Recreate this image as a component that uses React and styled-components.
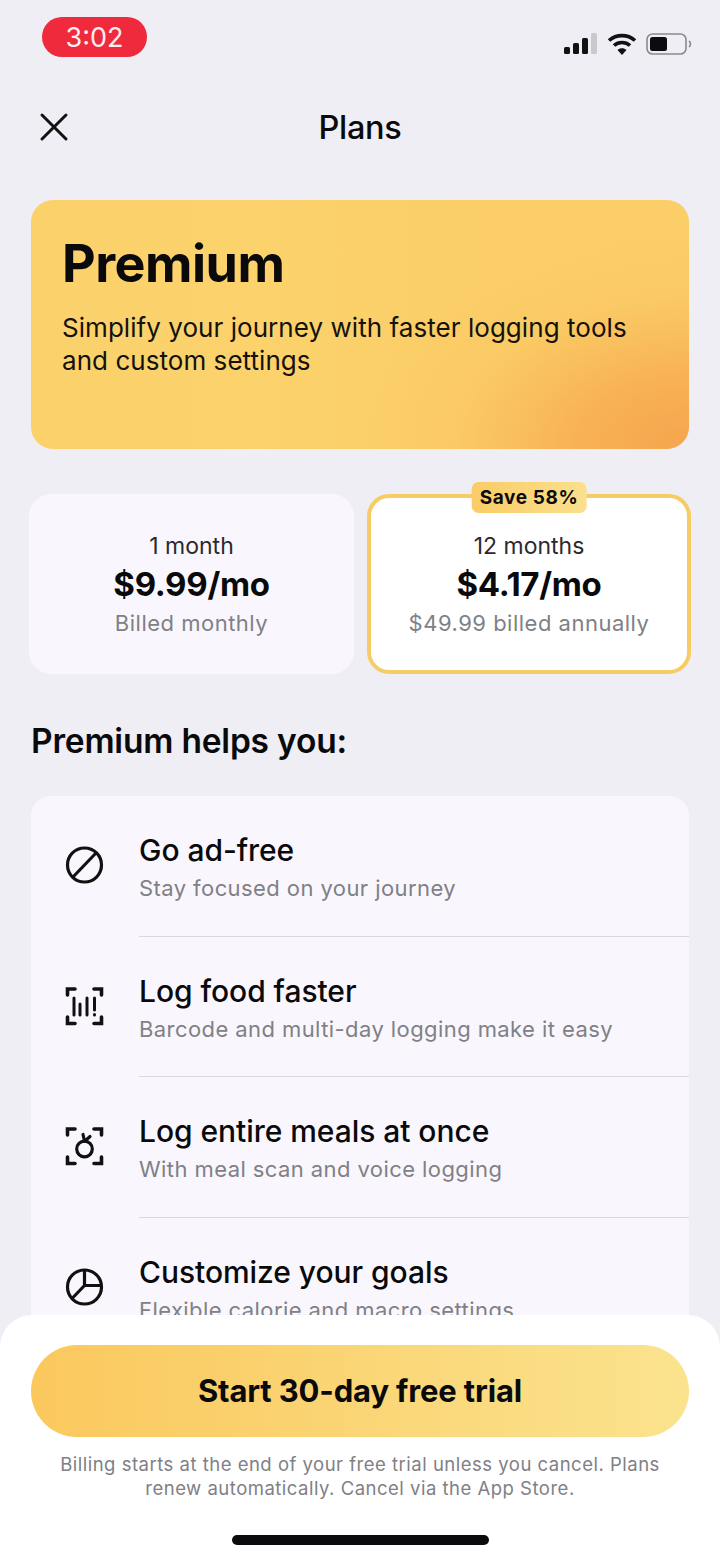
import React from "react";
import styled, { createGlobalStyle } from "styled-components";

const GlobalStyle = createGlobalStyle`
    html, body {
        margin: 0;
        padding: 0;
        background: #eeeef4;
        font-family: Inter, "Liberation Sans", sans-serif;
        color: #0a0a0c;
    }
`

const Page = styled.div`
    position: relative;
    width: 720px;
    height: 1560px;
    overflow: hidden;
    background: #eeeef4;
`

const StatusBar = styled.div`
    display: flex;
    align-items: center;
    justify-content: space-between;
    height: 40px;
    padding: 17px 28px 0 42px;
`

const TimePill = styled.div`
    display: flex;
    align-items: center;
    justify-content: center;
    width: 105px;
    height: 40px;
    border-radius: 20px;
    background: #ee2a3c;
    color: #fbeef0;
    font-size: 27px;
    font-weight: 400;
`

const StatusIcons = styled.div`
    display: flex;
    align-items: center;
    gap: 9px;
    padding-top: 14px;
`

const NavBar = styled.div`
    position: relative;
    display: flex;
    align-items: center;
    justify-content: center;
    height: 60px;
    margin-top: 40px;
    margin-bottom: 43px;
`

const CloseButton = styled.div`
    position: absolute;
    left: 38px;
    top: 14px;
    width: 32px;
    height: 32px;

    svg {
        display: block;
    }
`

const NavTitle = styled.div`
    font-size: 32.5px;
    font-weight: 500;
    letter-spacing: -0.3px;
`

const Hero = styled.div`
    box-sizing: border-box;
    height: 249px;
    margin: 0 31px;
    padding: 31px 31px;
    border-radius: 22px;
    background:
        radial-gradient(ellipse 340px 220px at 100% 100%, #f6a54d 0%, rgba(247,170,80,0.8) 32%, rgba(249,190,90,0.3) 68%, rgba(250,200,100,0) 100%),
        linear-gradient(90deg, #fbd16b 0%, #fcd26c 35%, #fbcf68 60%, #fbce68 100%);
`

const HeroTitle = styled.div`
    font-size: 52px;
    line-height: 66px;
    font-weight: 700;
    letter-spacing: -0.5px;
`

const HeroText = styled.div`
    margin-top: 14px;
    font-size: 26px;
    line-height: 33px;
    letter-spacing: 0.05px;
    color: #14120c;
`

const Plans = styled.div`
    display: grid;
    grid-template-columns: 325px 324px;
    gap: 13px;
    margin: 45px 29px 0;
`

const PlanCard = styled.div`
    position: relative;
    box-sizing: border-box;
    display: flex;
    flex-direction: column;
    align-items: center;
    height: 180px;
    padding-top: ${p => (p.$selected ? "34px" : "38px")};
    border-radius: 22px;
    background: ${p => (p.$selected ? "#ffffff" : "#f9f7fd")};
    border: ${p => (p.$selected ? "4px solid #f7cc64" : "0")};
`

const SaveBadge = styled.div`
    position: absolute;
    top: -16px;
    left: 50%;
    transform: translateX(-50%);
    padding: 0 8px;
    height: 31px;
    line-height: 31px;
    border-radius: 7px;
    background: linear-gradient(90deg, #f9cc66, #fbe08f);
    font-size: 19px;
    font-weight: 700;
    letter-spacing: 0.6px;
    white-space: nowrap;
`

const PlanTerm = styled.div`
    font-size: 23px;
    line-height: 28px;
    color: #2a2a2e;
`

const PlanPrice = styled.div`
    margin-top: 3px;
    font-size: 33px;
    line-height: 42px;
    font-weight: 700;
    letter-spacing: -0.3px;
`

const PlanNote = styled.div`
    margin-top: 4px;
    font-size: 22px;
    line-height: 28px;
    letter-spacing: 0.5px;
    color: #808086;
`

const SectionTitle = styled.div`
    margin: 45px 31px 33px;
    font-size: 33.5px;
    line-height: 44px;
    font-weight: 600;
    letter-spacing: -0.2px;
`

const FeatureCard = styled.div`
    margin: 0 31px;
    border-radius: 20px;
    background: #f9f7fd;
`

const FeatureRow = styled.div`
    display: flex;
    height: 140.5px;
    box-sizing: border-box;
`

const FeatureIcon = styled.div`
    flex: 0 0 108px;
    display: flex;
    justify-content: center;
    padding-top: 49px;
    box-sizing: border-box;

    svg {
        display: block;
    }
`

const FeatureBody = styled.div`
    flex: 1;
    box-sizing: border-box;
    padding-top: 34px;
    border-bottom: ${p => (p.$last ? "0" : "1px solid #d8d8dd")};
`

const FeatureTitle = styled.div`
    font-size: 30px;
    line-height: 40px;
    font-weight: 500;
    letter-spacing: -0.05px;
`

const FeatureText = styled.div`
    margin-top: 3px;
    font-size: 22px;
    line-height: 30px;
    letter-spacing: 0.42px;
    color: #808086;
`

const BottomSheet = styled.div`
    position: absolute;
    left: 0;
    right: 0;
    bottom: 0;
    height: 245px;
    box-sizing: border-box;
    padding: 30px 31px 0;
    border-radius: 32px 32px 0 0;
    background: #ffffff;
`

const TrialButton = styled.div`
    display: flex;
    align-items: center;
    justify-content: center;
    box-sizing: border-box;
    height: 92px;
    padding-bottom: 2px;
    border-radius: 46px;
    background: linear-gradient(90deg, #fac85d 0%, #fbe38e 100%);
    font-size: 31px;
    font-weight: 700;
    letter-spacing: -0.15px;
`

const Legal = styled.div`
    margin-top: 15px;
    font-size: 18.5px;
    line-height: 24px;
    letter-spacing: 0.5px;
    text-align: center;
    color: #808086;
`

const HomeBar = styled.div`
    position: absolute;
    left: 232px;
    bottom: 15px;
    width: 257px;
    height: 10px;
    border-radius: 5px;
    background: #0c0c0e;
`

const SignalIcon = () => (
    <svg width="34" height="22" viewBox="0 0 34 22">
        <rect x="0" y="14" width="6" height="7" rx="1.5" fill="#111" />
        <rect x="9" y="10" width="6" height="11" rx="1.5" fill="#111" />
        <rect x="18" y="5" width="6" height="16" rx="1.5" fill="#111" />
        <rect x="27" y="0" width="6" height="21" rx="1.5" fill="#c9c9cd" />
    </svg>
);

const WifiIcon = () => (
    <svg width="30" height="22" viewBox="0 0 30 22" fill="none" stroke="#111" strokeWidth="3.6">
        <path d="M2 7.5 C9.5 1 20.5 1 28 7.5" />
        <path d="M7 12.5 C11.5 8.5 18.5 8.5 23 12.5" />
        <path d="M15 22 L10.5 17 C13 14.6 17 14.6 19.5 17 Z" fill="#111" stroke="none" />
    </svg>
);

const BatteryIcon = () => (
    <svg width="46" height="22" viewBox="0 0 46 22">
        <rect x="1" y="1" width="39" height="20" rx="5.5" fill="none" stroke="#8a8a8e" strokeWidth="1.6" />
        <rect x="4" y="4" width="17" height="14" rx="2.5" fill="#0c0c0e" />
        <path d="M43 8 C45 9.5 45 12.5 43 14" fill="none" stroke="#8a8a8e" strokeWidth="1.6" />
    </svg>
);

const CloseIcon = () => (
    <svg width="32" height="32" viewBox="0 0 32 32" fill="none" stroke="#111" strokeWidth="3" strokeLinecap="round">
        <path d="M4 4 L28 28" />
        <path d="M28 4 L4 28" />
    </svg>
);

const iconProps = {
    width: 40,
    height: 40,
    viewBox: "0 0 40 40",
    fill: "none",
    stroke: "#111",
    strokeWidth: 3.2,
};

const NoAdsIcon = () => (
    <svg {...iconProps}>
        <circle cx="19.5" cy="20" r="17" />
        <path d="M8 32 L31 8" />
    </svg>
);

const BarcodeIcon = () => (
    <svg {...iconProps}>
        <path d="M10 3 H2.5 V9 M29 3 H36.5 V9 M2.5 31 V37.5 H10 M36.5 31 V37.5 H29" strokeWidth="3.6" strokeLinecap="round" />
        <path d="M9 12 V29 M15 18 V29 M22 12 V29 M29.5 12 V24 M29.5 28.5 V29" strokeWidth="3" strokeLinecap="round" />
    </svg>
);

const MealScanIcon = () => (
    <svg {...iconProps}>
        <path d="M10 3 H2.5 V9 M29 3 H36.5 V9 M2.5 31 V37.5 H10 M36.5 31 V37.5 H29" strokeWidth="3.6" strokeLinecap="round" />
        <circle cx="19.5" cy="23" r="7.8" />
        <path d="M19.5 15 L18 8.5 M20 15 L25 10.5" strokeLinecap="round" />
    </svg>
);

const PieIcon = () => (
    <svg {...iconProps}>
        <circle cx="19.5" cy="20" r="17" />
        <path d="M19.5 3 V18.5 H36.5 M19.5 18.5 L7.5 31" />
    </svg>
);

const features = [
    { icon: <NoAdsIcon />, title: "Go ad-free", text: "Stay focused on your journey" },
    { icon: <BarcodeIcon />, title: "Log food faster", text: "Barcode and multi-day logging make it easy" },
    { icon: <MealScanIcon />, title: "Log entire meals at once", text: "With meal scan and voice logging" },
    { icon: <PieIcon />, title: "Customize your goals", text: "Flexible calorie and macro settings", last: true },
];

const App = () => {
    return (
        <Page>
            <GlobalStyle />
            <StatusBar>
                <TimePill>3:02</TimePill>
                <StatusIcons>
                    <SignalIcon />
                    <WifiIcon />
                    <BatteryIcon />
                </StatusIcons>
            </StatusBar>
            <NavBar>
                <CloseButton>
                    <CloseIcon />
                </CloseButton>
                <NavTitle>Plans</NavTitle>
            </NavBar>
            <Hero>
                <HeroTitle>Premium</HeroTitle>
                <HeroText>
                    Simplify your journey with faster logging tools
                    <br />
                    and custom settings
                </HeroText>
            </Hero>
            <Plans>
                <PlanCard>
                    <PlanTerm>1 month</PlanTerm>
                    <PlanPrice>$9.99/mo</PlanPrice>
                    <PlanNote>Billed monthly</PlanNote>
                </PlanCard>
                <PlanCard $selected>
                    <SaveBadge>Save 58%</SaveBadge>
                    <PlanTerm>12 months</PlanTerm>
                    <PlanPrice>$4.17/mo</PlanPrice>
                    <PlanNote>$49.99 billed annually</PlanNote>
                </PlanCard>
            </Plans>
            <SectionTitle>Premium helps you:</SectionTitle>
            <FeatureCard>
                {features.map((f) => (
                    <FeatureRow key={f.title}>
                        <FeatureIcon>{f.icon}</FeatureIcon>
                        <FeatureBody $last={f.last}>
                            <FeatureTitle>{f.title}</FeatureTitle>
                            <FeatureText>{f.text}</FeatureText>
                        </FeatureBody>
                    </FeatureRow>
                ))}
            </FeatureCard>
            <BottomSheet>
                <TrialButton>Start 30-day free trial</TrialButton>
                <Legal>
                    Billing starts at the end of your free trial unless you cancel. Plans
                    <br />
                    renew automatically. Cancel via the App Store.
                </Legal>
            </BottomSheet>
            <HomeBar />
        </Page>
    );
}

export default App;
